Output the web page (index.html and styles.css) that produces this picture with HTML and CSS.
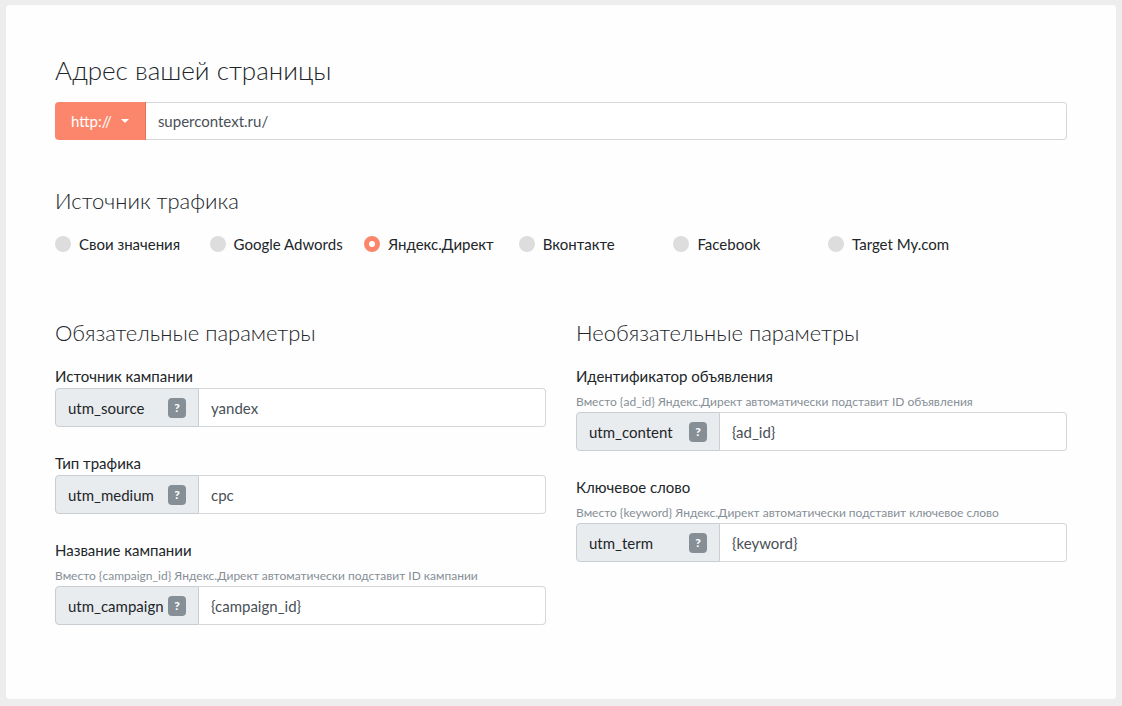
FILE: index.html
```html
<!DOCTYPE html>
<html lang="ru">
<head>
<meta charset="utf-8">
<meta name="viewport" content="width=device-width, initial-scale=1">
<title>Генератор UTM-меток</title>
<link rel="stylesheet" href="styles.css">
</head>
<body>
<form class="card">
  <section class="address">
    <h1 class="title title-large"><label for="url">Адрес вашей страницы</label></h1>
    <div class="group">
      <button class="protocol" type="button" aria-haspopup="true">http://<span class="caret"></span></button>
      <input class="field" id="url" type="text" value="supercontext.ru/">
    </div>
  </section>

  <section class="traffic">
    <h2 class="title" id="traffic-title">Источник трафика</h2>
    <div class="sources" role="radiogroup" aria-labelledby="traffic-title">
      <label class="source"><input class="radio" type="radio" name="source">Свои значения</label>
      <label class="source"><input class="radio" type="radio" name="source">Google Adwords</label>
      <label class="source"><input class="radio" type="radio" name="source" checked>Яндекс.Директ</label>
      <label class="source"><input class="radio" type="radio" name="source">Вконтакте</label>
      <label class="source"><input class="radio" type="radio" name="source">Facebook</label>
      <label class="source"><input class="radio" type="radio" name="source">Target My.com</label>
    </div>
  </section>

  <div class="columns">
    <section class="params">
      <h2 class="title">Обязательные параметры</h2>
      <div class="param">
        <label class="label" for="utm-source">Источник кампании</label>
        <div class="group">
          <div class="addon">utm_source<button class="hint" type="button">?</button></div>
          <input class="field" id="utm-source" type="text" value="yandex">
        </div>
      </div>
      <div class="param">
        <label class="label" for="utm-medium">Тип трафика</label>
        <div class="group">
          <div class="addon">utm_medium<button class="hint" type="button">?</button></div>
          <input class="field" id="utm-medium" type="text" value="cpc">
        </div>
      </div>
      <div class="param">
        <label class="label" for="utm-campaign">Название кампании</label>
        <p class="help">Вместо {campaign_id} Яндекс.Директ автоматически подставит ID кампании</p>
        <div class="group">
          <div class="addon">utm_campaign<button class="hint" type="button">?</button></div>
          <input class="field" id="utm-campaign" type="text" value="{campaign_id}">
        </div>
      </div>
    </section>

    <section class="params">
      <h2 class="title">Необязательные параметры</h2>
      <div class="param">
        <label class="label" for="utm-content">Идентификатор объявления</label>
        <p class="help">Вместо {ad_id} Яндекс.Директ автоматически подставит ID объявления</p>
        <div class="group">
          <div class="addon">utm_content<button class="hint" type="button">?</button></div>
          <input class="field" id="utm-content" type="text" value="{ad_id}">
        </div>
      </div>
      <div class="param">
        <label class="label" for="utm-term">Ключевое слово</label>
        <p class="help">Вместо {keyword} Яндекс.Директ автоматически подставит ключевое слово</p>
        <div class="group">
          <div class="addon">utm_term<button class="hint" type="button">?</button></div>
          <input class="field" id="utm-term" type="text" value="{keyword}">
        </div>
      </div>
    </section>
  </div>
</form>
</body>
</html>
```
FILE: styles.css
```css
* {
  box-sizing: border-box;
}

body {
  margin: 0;
  padding: 5px 6px 7px;
  background: #ededed;
  color: #212529;
  font: 15px/24px Lato, "Open Sans", sans-serif;
}

button,
input {
  font: inherit;
}

.card {
  padding: 49px 49px 74px;
  border-radius: 4px;
  background: #fefefe;
}

.title {
  margin: 0;
  font-size: 22px;
  font-weight: 300;
  line-height: 32px;
}

.title-large {
  margin-bottom: 16px;
  font-size: 26px;
}

.group {
  display: flex;
  min-height: 39px;
}

.address .group {
  min-height: 38px;
}

.protocol {
  display: flex;
  align-items: center;
  gap: 9px;
  padding: 0 16px;
  border: 0;
  border-right: 1px solid #e0735b;
  border-radius: 4px 0 0 4px;
  background: #fb866c;
  color: #fff;
}

.caret {
  border: 4px solid transparent;
  border-top-color: #fff;
  border-bottom: 0;
}

.field {
  flex: 1;
  min-width: 0;
  padding: 0 12px;
  border: 1px solid #d5d7d9;
  border-left: 0;
  border-radius: 0 4px 4px 0;
  background: #fff;
  color: #495057;
}

.traffic {
  margin-top: 45px;
}

.sources {
  display: grid;
  grid-template-columns: repeat(6, 11fr) 6fr;
  margin-top: 15px;
}

.source {
  display: flex;
  align-items: center;
  gap: 8px;
  white-space: nowrap;
}

.radio {
  flex: none;
  width: 16px;
  height: 16px;
  margin: 0;
  border-radius: 50%;
  background: #ddd;
  appearance: none;
}

.radio:checked {
  border: 5px solid #fb866c;
  background: #fff;
}

.columns {
  display: grid;
  grid-template-columns: 1fr 1fr;
  gap: 30px;
  margin-top: 61px;
}

.params {
  display: flex;
  flex-direction: column;
  gap: 24px;
}

.params .title {
  margin-bottom: -9px;
}

.label {
  display: block;
}

.help {
  margin: 0;
  padding-top: 4px;
  color: #868e96;
  font-size: 12px;
  line-height: 20px;
}

.addon {
  display: flex;
  flex: none;
  align-items: center;
  justify-content: space-between;
  width: 144px;
  padding: 0 12px;
  border: 1px solid #c9ced2;
  border-radius: 4px 0 0 4px;
  background: #e9ecef;
}

.hint {
  width: 18px;
  height: 20px;
  padding: 0;
  border: 0;
  border-radius: 4px;
  background: #868e96;
  color: #fff;
  font-size: 12px;
  font-weight: 900;
  line-height: 20px;
}
```
